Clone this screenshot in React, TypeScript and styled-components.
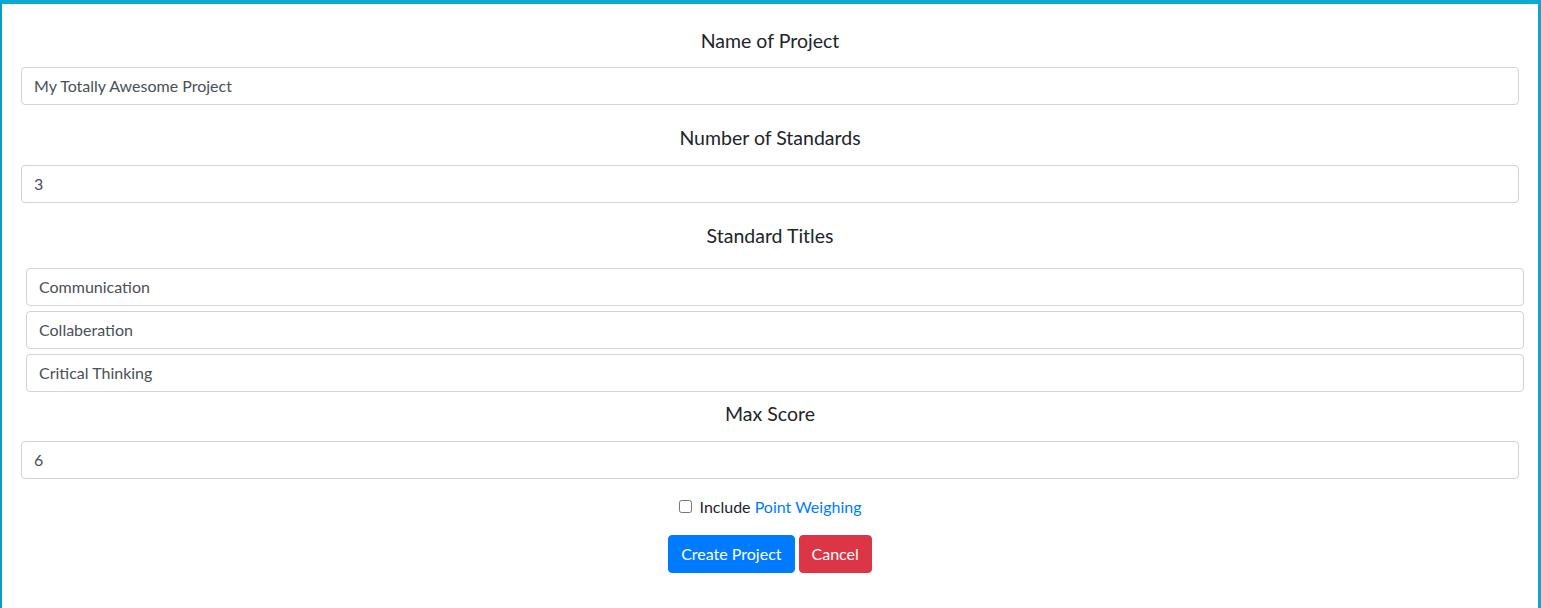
import styled, { createGlobalStyle } from "styled-components";

const GlobalStyle = createGlobalStyle`
  html, body {
    margin: 0;
    padding: 0;
    background: #fff;
  }
  body {
    font-family: "Segoe UI", Lato, "Open Sans", sans-serif;
    color: #212529;
  }
  * {
    box-sizing: border-box;
  }
`;

const Panel = styled.div`
  height: 608px;
  border-top: 4px solid #0aaad2;
  border-left: 2px solid #0a9dc3;
  border-right: 3px solid #0aa6ce;
  padding: 22px 19px 0 19px;
`;

const Group = styled.div<{ $after: number }>`
  display: flex;
  flex-direction: column;
  margin-bottom: ${(p) => p.$after}px;
`;

const Heading = styled.label<{ $gap: number }>`
  display: block;
  text-align: center;
  font-size: 19.5px;
  line-height: 29px;
  height: 30px;
  padding-bottom: 1px;
  margin-bottom: ${(p) => p.$gap}px;
  color: #212529;
`;

const TextInput = styled.input<{ $shift?: boolean }>`
  display: block;
  width: 100%;
  height: 38px;
  padding: 5px 12px 7px;
  font-family: inherit;
  font-size: 16px;
  line-height: 24px;
  color: #495057;
  background: #fff;
  border: 1px solid #ced4da;
  border-radius: 4px;
  outline: none;
  margin-left: ${(p) => (p.$shift ? "5px" : "0")};
`;

const TitleList = styled.div`
  display: flex;
  flex-direction: column;
  gap: 5px;
`;

const CheckRow = styled.div`
  display: flex;
  justify-content: center;
  align-items: center;
  gap: 8px;
  font-size: 16px;
  line-height: 24px;
  margin-bottom: 16px;

  >input {
    width: 13px;
    height: 13px;
    margin: 0 0 2px 0;
    accent-color: #888;
  }

  >span a {
    color: #007bff;
    text-decoration: none;
  }
`;

const Buttons = styled.div`
  display: flex;
  justify-content: center;
  gap: 4px;
`;

const Button = styled.button<{ $kind: "primary" | "danger" }>`
  height: 38px;
  padding: 6px 12px;
  font-family: inherit;
  font-size: 16px;
  line-height: 24px;
  color: #fff;
  border: 1px solid ${(p) => (p.$kind === "primary" ? "#007bff" : "#dc3545")};
  background: ${(p) => (p.$kind === "primary" ? "#007bff" : "#dc3545")};
  border-radius: 4px;
  cursor: pointer;
`;

const titles = ["Communication", "Collaberation", "Critical Thinking"];

const App = () => {
  return (
    <>
      <GlobalStyle />
      <Panel>
        <Group $after={18}>
          <Heading $gap={11}>Name of Project</Heading>
          <TextInput defaultValue="My Totally Awesome Project" />
        </Group>

        <Group $after={18}>
          <Heading $gap={12}>Number of Standards</Heading>
          <TextInput defaultValue="3" />
        </Group>

        <Group $after={7}>
          <Heading $gap={17}>Standard Titles</Heading>
          <TitleList>
            {titles.map((t) => (
              <TextInput key={t} $shift defaultValue={t} />
            ))}
          </TitleList>
        </Group>

        <Group $after={16}>
          <Heading $gap={12}>Max Score</Heading>
          <TextInput defaultValue="6" />
        </Group>

        <CheckRow>
          <input type="checkbox" />
          <span>
            Include <a href="#">Point Weighing</a>
          </span>
        </CheckRow>

        <Buttons>
          <Button $kind="primary">Create Project</Button>
          <Button $kind="danger">Cancel</Button>
        </Buttons>
      </Panel>
    </>
  );
};

export default App;
